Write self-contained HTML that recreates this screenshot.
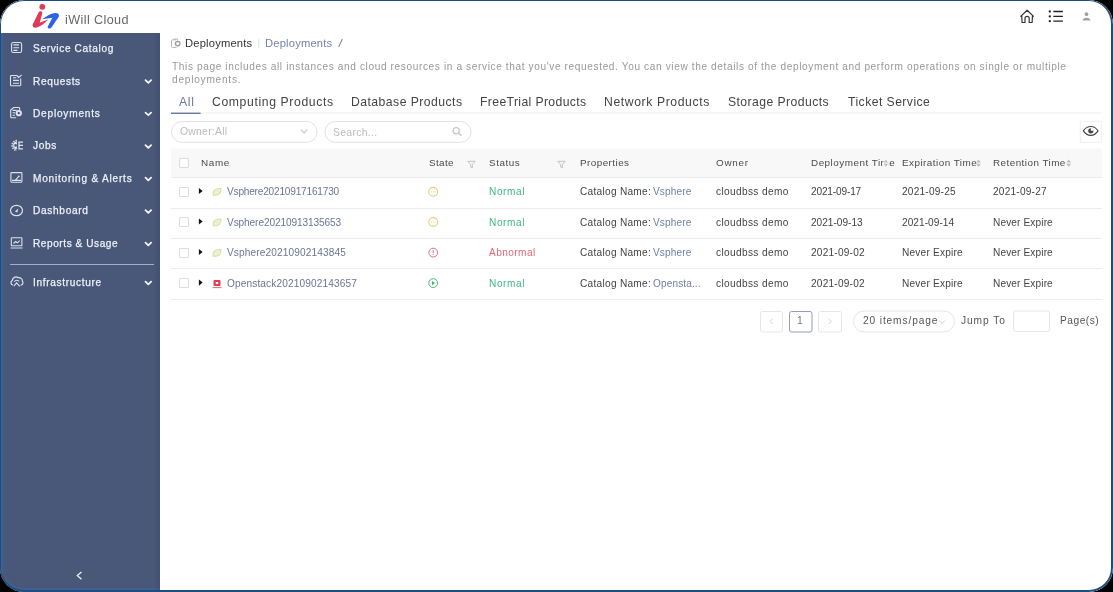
<!DOCTYPE html>
<html><head><meta charset="utf-8">
<style>
*{box-sizing:border-box;margin:0;padding:0}
html,body{width:1113px;height:592px;overflow:hidden;background:#000}
body{font-family:"Liberation Sans",sans-serif;position:relative}
#win{position:absolute;left:0;top:0;width:1113px;height:592px;border-radius:24px;overflow:hidden;background:#fff}
#bord{position:absolute;left:0;top:0;width:1113px;height:592px;border-radius:24px;border-style:solid;border-color:#204d80;border-width:1px 2px 2px 1px}
.a{position:absolute}
.t{position:absolute;white-space:nowrap;line-height:1;will-change:transform}
svg{position:absolute;overflow:visible}
.cb{position:absolute;width:10px;height:10px;border:1px solid #dcdcdc;border-radius:1px;background:#fff}
.rl{position:absolute;left:171px;width:931px;height:1px;background:#ececec}
</style></head><body>
<div id="win">
<!-- sidebar -->
<div class="a" style="left:0;top:33px;width:160px;height:560px;background:#495779"></div>
<div class="a" style="left:0;top:0;width:160px;height:592px;border-style:solid;border-color:#3e6192;border-width:0 0 4.5px 3px;border-bottom-left-radius:24px;clip-path:inset(33px 0 0 0)"></div>
<div class="a" style="left:3px;top:33px;width:1.5px;height:554px;background:#46597f"></div>
<div class="a" style="left:154px;top:33px;width:6px;height:560px;background:linear-gradient(90deg,rgba(60,66,100,0),rgba(60,66,100,0.35))"></div>
<div class="a" style="left:10px;top:263.5px;width:144px;height:1.5px;background:#a3add0"></div>
<!-- sidebar icons -->
<svg style="left:0;top:0" width="160" height="592" fill="none" stroke="#dde2f0" stroke-width="1.1">
  <!-- service catalog -->
  <rect x="11.6" y="42.5" width="10" height="10" rx="1.8"/>
  <path d="M13.4 44.9h5.6M13.4 47.7h5.6M13.4 50.4h4"/>
  <!-- requests -->
  <path d="M16.9 75.5H11.3a0.8 0.8 0 0 0 -0.8 0.8V84.9a0.8 0.8 0 0 0 0.8 0.8H19.9a0.8 0.8 0 0 0 0.8 -0.8V78.6"/>
  <path d="M13 77.7h3.3M13 80.4h6M13 83.3h6M16.9 75.5l1.8 1.9 3-2.6"/>
  <!-- deployments -->
  <path d="M19.6 110.2V108.3a0.8 0.8 0 0 0 -0.8 -0.8H13.7L10.7 110.1V116.9a0.8 0.8 0 0 0 0.8 0.8H16.2"/>
  <path d="M12.6 110.4h4.2M12.6 112.8h2.6M12.6 115.2h2.4"/>
  <circle cx="18.8" cy="113.2" r="3.1" fill="#dde2f0" stroke="none"/>
  <circle cx="18.8" cy="113.2" r="1.1" fill="#3a4565" stroke="none"/>
  <!-- jobs -->
  <path d="M16.9 141.6A3.8 3.8 0 0 0 16.9 149.2Z" fill="#dde2f0" stroke="none"/>
  <path d="M16.9 140.6a4.8 4.8 0 0 0 0 9.6" stroke-width="1.6" stroke-dasharray="1.4 1"/>
  <circle cx="15.6" cy="145.4" r="1.3" fill="#495779" stroke="none"/>
  <path d="M23 142.1H19V148.8H23M19 145.4H23" stroke-width="1.3"/>
  <!-- monitoring -->
  <rect x="10.9" y="172.6" width="11" height="9.6" rx="0.6"/>
  <path d="M12 180.4h9M15.2 180.2C16.5 179.5 17.5 177.5 18.8 176.4"/>
  <circle cx="18.9" cy="176.3" r="0.9" fill="#dde2f0" stroke="none"/>
  <!-- dashboard -->
  <ellipse cx="16.5" cy="210.5" rx="6" ry="5.2" stroke-width="1.2"/>
  <path d="M14.9 211.6L18.3 208.6L17.3 212.4Z" fill="#dde2f0" stroke="none"/>
  <!-- reports -->
  <rect x="11.3" y="237.8" width="10.6" height="8" rx="0.4"/>
  <path d="M10.6 248h12M13.5 243.5l2.2-2 1.6 1.3 2.5-2.1"/>
  <!-- infra -->
  <path d="M13 285C10.8 284.8 10.2 281.8 12.2 280.6C12.6 277.6 15.6 276 18 277.6C20.4 277.2 22.6 278.8 22.4 281.2C23.6 282.6 22.8 285 20.6 285.2" stroke-width="1.2"/>
  <path d="M14.2 281.8C15.6 279.8 18.2 279.8 19.2 281.6M13.8 286.2L16.6 282.8L19.8 286.4" stroke-width="1.1"/>
  <!-- chevrons -->
  <g stroke="#f4f6fb" stroke-width="1.8" stroke-linecap="round" stroke-linejoin="round">
  <path d="M145.5 80.2l2.8 2.6 2.8-2.6"/>
  <path d="M145.5 112.6l2.8 2.6 2.8-2.6"/>
  <path d="M145.5 145.2l2.8 2.6 2.8-2.6"/>
  <path d="M145.5 177.7l2.8 2.6 2.8-2.6"/>
  <path d="M145.5 210.2l2.8 2.6 2.8-2.6"/>
  <path d="M145.5 242.7l2.8 2.6 2.8-2.6"/>
  <path d="M145.5 281.7l2.8 2.6 2.8-2.6"/>
  </g>
  <path d="M81.5 572l-4.2 3.6 4.2 3.6" stroke="#eef0f8" stroke-width="1.3"/>
</svg>
<!-- header icons -->
<svg style="left:0;top:0" width="1113" height="40" fill="none">
  <path d="M1020.4 16.6l6.7-6.4 6.7 6.4M1021.7 15.2l0.4 7.3h2.9v-4.1a2.1 2.1 0 0 1 4.2 0v4.1h2.9l0.4-7.3" stroke="#333" stroke-width="1.2" stroke-linejoin="round"/>
  <g fill="#222"><circle cx="1049.8" cy="11.5" r="1.15"/><circle cx="1049.8" cy="16.4" r="1.15"/><circle cx="1049.8" cy="21.2" r="1.15"/></g>
  <path d="M1053.3 11.5h9.6M1053.3 16.4h9.6M1053.3 21.2h9.6" stroke="#222" stroke-width="1.3"/>
  <circle cx="1086.5" cy="14.2" r="1.85" fill="#a0a0a0"/>
  <path d="M1082.6 20.6c0-1.8 1.8-2.9 3.9-2.9s3.9 1.1 3.9 2.9z" fill="#a0a0a0"/>
  <!-- logo -->
  <circle cx="42.3" cy="6.8" r="2.9" fill="#e23a55"/>
  <path d="M38.8 12C40.2 10.8 42.6 11.2 42.3 13.2L39.8 22.5C42.5 21.8 45.5 20.5 48.2 19.6C45.5 22.5 41 26.5 36.5 27.6C33.5 28.3 32.2 26.5 32.8 24.3Z" fill="#e23a55"/>
  <path d="M42.2 19.3C46 16.5 50.5 13.5 55 13C58 12.8 59.6 14.2 58.8 16.8L51.5 27.5C50.3 29.2 47.3 28.8 47.7 26.8L52.3 17.8C49 18.2 45.5 18.8 42.2 19.3Z" fill="#2f62e6"/>
</svg>
<!-- breadcrumb icon -->
<svg style="left:0;top:0" width="1113" height="592" fill="none">
  <path d="M176 39.8h-3.5a1 1 0 0 0 -1 1v5.6a1 1 0 0 0 1 1h4" stroke="#b5b5b5" stroke-width="1"/>
  <path d="M174 39.5v-0.5h3.5v1.5" stroke="#b5b5b5" stroke-width="1"/>
  <circle cx="177.7" cy="43.6" r="2.3" stroke="#999" stroke-width="1.2"/>
  <path d="M258.8 39v8.5" stroke="#ddd" stroke-width="1"/>
  <path d="M342.3 39l-3.6 8" stroke="#777" stroke-width="1"/>
  <!-- tab underline -->
  <rect x="171" y="112.5" width="930" height="1" fill="#eeeeee"/>
  <rect x="171" y="112.6" width="29.6" height="1.4" fill="#6a78a0"/>
  <!-- owner select -->
  <rect x="171.5" y="121.5" width="145.5" height="20.8" rx="10.4" stroke="#e2e2e2"/>
  <path d="M300.9 129.5l3.2 3.4 3.2-3.4" stroke="#d2d2d2" stroke-width="1.5"/>
  <!-- search -->
  <rect x="325" y="121.5" width="146" height="20.8" rx="10.4" stroke="#e2e2e2"/>
  <circle cx="456.2" cy="130.7" r="3.1" stroke="#c8c8c8" stroke-width="1.3"/>
  <path d="M458.5 133l3 2.8" stroke="#c8c8c8" stroke-width="1.4"/>
  <!-- eye button -->
  <rect x="1080.3" y="121.3" width="21" height="21" stroke="#efefef"/>
  <path d="M1083.4 130.9C1087 125 1094.4 125 1098 130.9C1094.4 136.8 1087 136.8 1083.4 130.9z" stroke="#444" stroke-width="1.1"/>
  <circle cx="1090.8" cy="130.8" r="2.6" fill="#444"/>
  <path d="M1090.8 130.8V128.1A2.7 2.7 0 0 1 1093.5 130.8z" fill="#fff"/>
  <!-- table header -->
  <rect x="171" y="148.5" width="931" height="29" fill="#f8f8f8"/>
  <!-- filter icons -->
  <path d="M467.8 161.3h7.4l-2.9 3.4v3.3l-1.6-0.9v-2.4z" stroke="#bdbdbd" stroke-width="0.9" stroke-linejoin="round"/>
  <path d="M557.8 161.3h7.4l-2.9 3.4v3.3l-1.6-0.9v-2.4z" stroke="#bdbdbd" stroke-width="0.9" stroke-linejoin="round"/>
  
  <!-- carets -->
  <g fill="#111">
  <path d="M198.9 187.9l3.7 3.1-3.7 3.1z"/>
  <path d="M198.9 218.4l3.7 3.1-3.7 3.1z"/>
  <path d="M198.9 248.9l3.7 3.1-3.7 3.1z"/>
  <path d="M198.9 279.5l3.7 3.1-3.7 3.1z"/>
  </g>
  <!-- vsphere leaf icons -->
  <path d="M213.2 195.1C212.6 190.4 215.5 188.3 220.8 188.6C221.4 193.1 218.5 195.8 213.2 195.1z" fill="#ebf2cf" stroke="#d3e0a8" stroke-width="1.1"/>
  <path d="M213.2 225.6C212.6 220.9 215.5 218.8 220.8 219.1C221.4 223.6 218.5 226.3 213.2 225.6z" fill="#ebf2cf" stroke="#d3e0a8" stroke-width="1.1"/>
  <path d="M213.2 256.1C212.6 251.4 215.5 249.3 220.8 249.6C221.4 254.1 218.5 256.8 213.2 256.1z" fill="#ebf2cf" stroke="#d3e0a8" stroke-width="1.1"/>
  <!-- openstack icon -->
  <rect x="213.5" y="280" width="7" height="6" rx="0.8" fill="#e0404f"/>
  <rect x="215.8" y="282" width="2.4" height="2" fill="#fff"/>
  <path d="M212.5 287.6h9" stroke="#e0404f" stroke-width="0.8"/>
  <!-- state icons -->
  <circle cx="433.2" cy="191.8" r="4.4" stroke="#e6cf78" stroke-width="1.1"/>
  <path d="M431 191.8h0.8M432.8 191.8h0.8M434.6 191.8h0.8" stroke="#e2c870" stroke-width="0.9"/>
  <circle cx="433.2" cy="222" r="4.4" stroke="#e6cf78" stroke-width="1.1"/>
  <path d="M431 222h0.8M432.8 222h0.8M434.6 222h0.8" stroke="#e2c870" stroke-width="0.9"/>
  <circle cx="433.2" cy="252.6" r="4.4" stroke="#d8707e" stroke-width="1"/>
  <path d="M433.2 250.2v2.8M433.2 254.1v0.9" stroke="#d8707e" stroke-width="1"/>
  <circle cx="433.2" cy="283.1" r="4.4" stroke="#50b880" stroke-width="1"/>
  <path d="M432 281l3 2.1-3 2.1z" fill="#40b070"/>
  <!-- pagination -->
  <rect x="760.5" y="311.5" width="22" height="20.5" rx="2" stroke="#e6e6e6"/>
  <path d="M772.7 318.8l-2.6 2.6 2.6 2.6" stroke="#ccc" stroke-width="0.9"/>
  <rect x="789.5" y="311.5" width="22.5" height="20.5" rx="2" stroke="#959cb8"/>
  <rect x="818.5" y="311.5" width="23" height="20.5" rx="2" stroke="#e6e6e6"/>
  <path d="M828.7 318.8l2.6 2.6-2.6 2.6" stroke="#ccc" stroke-width="0.9"/>
  <rect x="853.5" y="311" width="101" height="21" rx="10.5" stroke="#e6e6e6"/>
  <path d="M939 320.5l3 3 3-3" stroke="#c8c8c8" stroke-width="0.9"/>
  <rect x="1013.5" y="311" width="36" height="20.5" rx="2" stroke="#e6e6e6"/>
</svg>
<div class="cb" style="left:178.5px;top:157.5px"></div>
<div class="cb" style="left:178.5px;top:186.5px"></div>
<div class="cb" style="left:178.5px;top:217px"></div>
<div class="cb" style="left:178.5px;top:247.5px"></div>
<div class="cb" style="left:178.5px;top:278px"></div>
<div class="rl" style="top:177px"></div>
<div class="rl" style="top:207.5px"></div>
<div class="rl" style="top:238px"></div>
<div class="rl" style="top:268px"></div>
<div class="rl" style="top:299px"></div>
<div class="t" id="logo" style="left:64.50px;top:14.13px;font-size:12.60px;color:#666;font-weight:normal;letter-spacing:0.400px;">iWill Cloud</div>
<div class="t" id="s0" style="left:32.80px;top:43.85px;font-size:10.10px;color:#eef1f8;font-weight:normal;letter-spacing:0.643px;-webkit-text-stroke:0.25px #eef1f8;">Service Catalog</div>
<div class="t" id="s1" style="left:32.80px;top:76.65px;font-size:10.10px;color:#eef1f8;font-weight:normal;letter-spacing:0.643px;-webkit-text-stroke:0.25px #eef1f8;">Requests</div>
<div class="t" id="s2" style="left:32.80px;top:109.15px;font-size:10.10px;color:#eef1f8;font-weight:normal;letter-spacing:0.800px;-webkit-text-stroke:0.25px #eef1f8;">Deployments</div>
<div class="t" id="s3" style="left:32.80px;top:141.45px;font-size:10.10px;color:#eef1f8;font-weight:normal;letter-spacing:0.700px;-webkit-text-stroke:0.25px #eef1f8;">Jobs</div>
<div class="t" id="s4" style="left:32.80px;top:174.05px;font-size:10.10px;color:#eef1f8;font-weight:normal;letter-spacing:0.778px;-webkit-text-stroke:0.25px #eef1f8;">Monitoring &amp; Alerts</div>
<div class="t" id="s5" style="left:32.80px;top:206.45px;font-size:10.10px;color:#eef1f8;font-weight:normal;letter-spacing:0.700px;-webkit-text-stroke:0.25px #eef1f8;">Dashboard</div>
<div class="t" id="s6" style="left:32.80px;top:239.15px;font-size:10.10px;color:#eef1f8;font-weight:normal;letter-spacing:0.557px;-webkit-text-stroke:0.25px #eef1f8;">Reports &amp; Usage</div>
<div class="t" id="s7" style="left:32.80px;top:278.15px;font-size:10.10px;color:#eef1f8;font-weight:normal;letter-spacing:0.669px;-webkit-text-stroke:0.25px #eef1f8;">Infrastructure</div>
<div class="t" id="bc1" style="left:184.60px;top:37.82px;font-size:11.20px;color:#333;font-weight:normal;letter-spacing:0.180px;">Deployments</div>
<div class="t" id="bc2" style="left:265.40px;top:37.82px;font-size:11.20px;color:#7282ad;font-weight:normal;letter-spacing:0.180px;">Deployments</div>
<div class="t" id="d1" style="left:171.80px;top:61.85px;font-size:10.10px;color:#999;font-weight:normal;letter-spacing:0.621px;">This page includes all instances and cloud resources in a service that you've requested. You can view the details of the deployment and perform operations on single or multiple</div>
<div class="t" id="d2" style="left:171.80px;top:74.95px;font-size:10.10px;color:#999;font-weight:normal;letter-spacing:0.773px;">deployments.</div>
<div class="t" id="tab0" style="left:179.20px;top:95.77px;font-size:12.20px;color:#6a78a0;font-weight:normal;letter-spacing:0.650px;">All</div>
<div class="t" id="tab1" style="left:212.20px;top:95.77px;font-size:12.20px;color:#444;font-weight:normal;letter-spacing:0.624px;">Computing Products</div>
<div class="t" id="tab2" style="left:351.20px;top:95.77px;font-size:12.20px;color:#444;font-weight:normal;letter-spacing:0.462px;">Database Products</div>
<div class="t" id="tab3" style="left:480.20px;top:95.77px;font-size:12.20px;color:#444;font-weight:normal;letter-spacing:0.371px;">FreeTrial Products</div>
<div class="t" id="tab4" style="left:604.30px;top:95.77px;font-size:12.20px;color:#444;font-weight:normal;letter-spacing:0.607px;">Network Products</div>
<div class="t" id="tab5" style="left:728.30px;top:95.77px;font-size:12.20px;color:#444;font-weight:normal;letter-spacing:0.427px;">Storage Products</div>
<div class="t" id="tab6" style="left:847.60px;top:95.77px;font-size:12.20px;color:#444;font-weight:normal;letter-spacing:0.446px;">Ticket Service</div>
<div class="t" id="own" style="left:179.60px;top:126.80px;font-size:10.40px;color:#bbb;font-weight:normal;letter-spacing:0.250px;">Owner:All</div>
<div class="t" id="srch" style="left:333.00px;top:128.30px;font-size:10.40px;color:#bbb;font-weight:normal;letter-spacing:0.325px;">Search...</div>
<div class="t" id="h0" style="left:201.00px;top:157.82px;font-size:9.90px;color:#4a4a4a;font-weight:normal;letter-spacing:0.633px;">Name</div>
<div class="t" id="h1" style="left:428.50px;top:157.82px;font-size:9.90px;color:#4a4a4a;font-weight:normal;letter-spacing:0.375px;">State</div>
<div class="t" id="h2" style="left:488.60px;top:157.82px;font-size:9.90px;color:#4a4a4a;font-weight:normal;letter-spacing:0.560px;">Status</div>
<div class="t" id="h3" style="left:579.90px;top:157.82px;font-size:9.90px;color:#4a4a4a;font-weight:normal;letter-spacing:0.444px;">Properties</div>
<div class="t" id="h4" style="left:716.30px;top:157.82px;font-size:9.90px;color:#4a4a4a;font-weight:normal;letter-spacing:0.750px;">Owner</div>
<div class="t" id="h5" style="left:810.80px;top:157.82px;font-size:9.90px;color:#4a4a4a;font-weight:normal;letter-spacing:0.500px;">Deployment Time</div>
<div class="t" id="h6" style="left:902.00px;top:157.82px;font-size:9.90px;color:#4a4a4a;font-weight:normal;letter-spacing:0.471px;">Expiration Time</div>
<div class="t" id="h7" style="left:992.70px;top:157.82px;font-size:9.90px;color:#4a4a4a;font-weight:normal;letter-spacing:0.454px;">Retention Time</div>
<div class="t" id="n0" style="left:227.00px;top:187.05px;font-size:10.10px;color:#6d7596;font-weight:normal;letter-spacing:-0.200px;">Vsphere20210917161730</div>
<div class="t" id="st0" style="left:489.20px;top:187.05px;font-size:10.10px;color:#40b880;font-weight:normal;letter-spacing:0.600px;">Normal</div>
<div class="t" id="cn0" style="left:579.90px;top:187.05px;font-size:10.10px;color:#444;font-weight:normal;letter-spacing:0.285px;">Catalog Name: </div>
<div class="t" id="cv0" style="left:652.70px;top:187.05px;font-size:10.10px;color:#7080aa;font-weight:normal;letter-spacing:0.133px;">Vsphere</div>
<div class="t" id="ow0" style="left:716.30px;top:187.05px;font-size:10.10px;color:#444;font-weight:normal;letter-spacing:0.367px;">cloudbss demo</div>
<div class="t" id="dp0" style="left:810.80px;top:187.05px;font-size:10.10px;color:#444;font-weight:normal;letter-spacing:-0.156px;">2021-09-17</div>
<div class="t" id="ex0" style="left:902.00px;top:187.05px;font-size:10.10px;color:#444;font-weight:normal;letter-spacing:0.222px;">2021-09-25</div>
<div class="t" id="rt0" style="left:992.70px;top:187.05px;font-size:10.10px;color:#444;font-weight:normal;letter-spacing:0.222px;">2021-09-27</div>
<div class="t" id="n1" style="left:227.00px;top:217.55px;font-size:10.10px;color:#6d7596;font-weight:normal;letter-spacing:-0.100px;">Vsphere20210913135653</div>
<div class="t" id="st1" style="left:489.20px;top:217.55px;font-size:10.10px;color:#40b880;font-weight:normal;letter-spacing:0.600px;">Normal</div>
<div class="t" id="cn1" style="left:579.90px;top:217.55px;font-size:10.10px;color:#444;font-weight:normal;letter-spacing:0.285px;">Catalog Name: </div>
<div class="t" id="cv1" style="left:652.70px;top:217.55px;font-size:10.10px;color:#7080aa;font-weight:normal;letter-spacing:0.133px;">Vsphere</div>
<div class="t" id="ow1" style="left:716.30px;top:217.55px;font-size:10.10px;color:#444;font-weight:normal;letter-spacing:0.367px;">cloudbss demo</div>
<div class="t" id="dp1" style="left:810.80px;top:217.55px;font-size:10.10px;color:#444;font-weight:normal;letter-spacing:0.000px;">2021-09-13</div>
<div class="t" id="ex1" style="left:902.00px;top:217.55px;font-size:10.10px;color:#444;font-weight:normal;letter-spacing:0.056px;">2021-09-14</div>
<div class="t" id="rt1" style="left:992.70px;top:217.55px;font-size:10.10px;color:#444;font-weight:normal;letter-spacing:0.127px;">Never Expire</div>
<div class="t" id="n2" style="left:227.00px;top:248.05px;font-size:10.10px;color:#6d7596;font-weight:normal;letter-spacing:0.140px;">Vsphere20210902143845</div>
<div class="t" id="st2" style="left:489.20px;top:248.05px;font-size:10.10px;color:#e06a78;font-weight:normal;letter-spacing:0.429px;">Abnormal</div>
<div class="t" id="cn2" style="left:579.90px;top:248.05px;font-size:10.10px;color:#444;font-weight:normal;letter-spacing:0.285px;">Catalog Name: </div>
<div class="t" id="cv2" style="left:652.70px;top:248.05px;font-size:10.10px;color:#7080aa;font-weight:normal;letter-spacing:0.133px;">Vsphere</div>
<div class="t" id="ow2" style="left:716.30px;top:248.05px;font-size:10.10px;color:#444;font-weight:normal;letter-spacing:0.367px;">cloudbss demo</div>
<div class="t" id="dp2" style="left:810.80px;top:248.05px;font-size:10.10px;color:#444;font-weight:normal;letter-spacing:0.222px;">2021-09-02</div>
<div class="t" id="ex2" style="left:902.00px;top:248.05px;font-size:10.10px;color:#444;font-weight:normal;letter-spacing:0.218px;">Never Expire</div>
<div class="t" id="rt2" style="left:992.70px;top:248.05px;font-size:10.10px;color:#444;font-weight:normal;letter-spacing:0.127px;">Never Expire</div>
<div class="t" id="n3" style="left:227.00px;top:278.65px;font-size:10.10px;color:#6d7596;font-weight:normal;letter-spacing:0.136px;">Openstack20210902143657</div>
<div class="t" id="st3" style="left:489.20px;top:278.65px;font-size:10.10px;color:#40b880;font-weight:normal;letter-spacing:0.600px;">Normal</div>
<div class="t" id="cn3" style="left:579.90px;top:278.65px;font-size:10.10px;color:#444;font-weight:normal;letter-spacing:0.285px;">Catalog Name: </div>
<div class="t" id="cv3" style="left:652.70px;top:278.65px;font-size:10.10px;color:#7080aa;font-weight:normal;letter-spacing:0.111px;">Opensta...</div>
<div class="t" id="ow3" style="left:716.30px;top:278.65px;font-size:10.10px;color:#444;font-weight:normal;letter-spacing:0.367px;">cloudbss demo</div>
<div class="t" id="dp3" style="left:810.80px;top:278.65px;font-size:10.10px;color:#444;font-weight:normal;letter-spacing:0.222px;">2021-09-02</div>
<div class="t" id="ex3" style="left:902.00px;top:278.65px;font-size:10.10px;color:#444;font-weight:normal;letter-spacing:0.218px;">Never Expire</div>
<div class="t" id="rt3" style="left:992.70px;top:278.65px;font-size:10.10px;color:#444;font-weight:normal;letter-spacing:0.127px;">Never Expire</div>
<div class="t" id="pg1" style="left:797.40px;top:316.28px;font-size:10.30px;color:#777;font-weight:normal;letter-spacing:0.000px;">1</div>
<div class="t" id="ipp" style="left:862.60px;top:315.87px;font-size:10.20px;color:#555;font-weight:normal;letter-spacing:0.867px;">20 items/page</div>
<div class="t" id="jt" style="left:961.40px;top:315.87px;font-size:10.20px;color:#555;font-weight:normal;letter-spacing:0.917px;">Jump To</div>
<div class="t" id="pgs" style="left:1059.50px;top:315.87px;font-size:10.20px;color:#555;font-weight:normal;letter-spacing:0.500px;">Page(s)</div>
<svg style="left:0;top:0" width="1113" height="592">
  <rect x="883.6" y="159" width="4.6" height="8.4" fill="#f8f8f8"/>
  <g fill="#bcbcbc">
  <path d="M883.8 162.6l2.1-3 2.1 3z"/><path d="M883.8 163.8l2.1 3 2.1-3z"/>
  <path d="M976.2 162.6l2.3-3.1 2.3 3.1z"/><path d="M976.2 163.8l2.3 3.1 2.3-3.1z"/>
  <path d="M1066.4 162.6l2.3-3.1 2.3 3.1z"/><path d="M1066.4 163.8l2.3 3.1 2.3-3.1z"/>
  </g>
</svg>
<div id="bord"></div>
</div>
</body></html>
